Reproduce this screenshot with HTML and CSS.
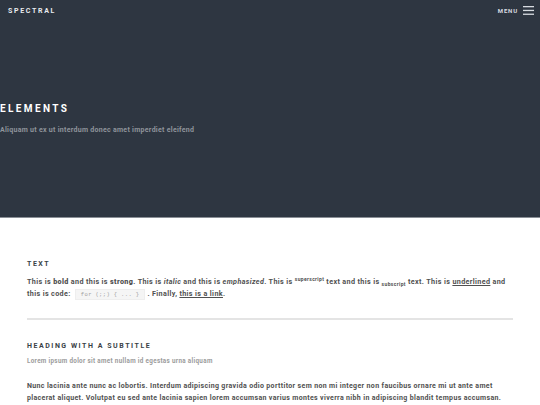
FILE: index.html
```html
<!DOCTYPE html>
<html lang="en">
<head>
  <meta charset="UTF-8">
  <title>Elements - Spectral</title>
  <link rel="stylesheet" href="styles.css">
</head>
<body>
  <header class="topbar">
    <a class="logo" href="#">Spectral</a>
    <a class="menu" href="#">Menu
      <svg class="menu-icon" width="11" height="9" viewBox="0 0 11 9">
        <rect x="0" y="0" width="11" height="1.3" fill="#d7dbe0"/>
        <rect x="0" y="3.8" width="11" height="1.3" fill="#d7dbe0"/>
        <rect x="0" y="7.6" width="11" height="1.3" fill="#d7dbe0"/>
      </svg>
    </a>
  </header>

  <section class="banner">
    <h1>Elements</h1>
    <p>Aliquam ut ex ut interdum donec amet imperdiet eleifend</p>
  </section>

  <main class="content">
    <section class="block">
      <h3>Text</h3>
      <p>This is <b>bold</b> and this is <strong>strong</strong>. This is <i>italic</i> and this is <em>emphasized</em>. This is <sup>superscript</sup> text and this is <sub>subscript</sub> text. This is <u>underlined</u> and this is code: <code>for (;;) { ... }</code>. Finally, <a href="#">this is a link</a>.</p>
    </section>

    <hr>

    <section class="block">
      <header class="heading">
        <h3>Heading with a Subtitle</h3>
        <p class="subtitle">Lorem ipsum dolor sit amet nullam id egestas urna aliquam</p>
      </header>
      <p class="lead">Nunc lacinia ante nunc ac lobortis. Interdum adipiscing gravida odio porttitor sem non mi integer non faucibus ornare mi ut ante amet placerat aliquet. Volutpat eu sed ante lacinia sapien lorem accumsan varius montes viverra nibh in adipiscing blandit tempus accumsan.</p>
    </section>
  </main>
</body>
</html>
```

FILE: styles.css
```css
body {
  margin: 0;
  font-family: Roboto, "Liberation Sans", sans-serif;
  font-weight: 700;
  background: #ffffff;
  color: #505050;
}

a {
  color: inherit;
}

.topbar {
  background: #2e3641;
  height: 21px;
  display: flex;
  align-items: center;
  justify-content: space-between;
  padding: 0 5px 0 8px;
}

.logo {
  color: #e9ecef;
  text-decoration: none;
  text-transform: uppercase;
  font-size: 7px;
  letter-spacing: 0.24em;
}

.menu {
  display: flex;
  align-items: center;
  gap: 5px;
  color: #d7dbe0;
  text-decoration: none;
  text-transform: uppercase;
  font-size: 6px;
  letter-spacing: 0.14em;
  padding-right: 1px;
}

.banner {
  background: #2e3641;
  height: 197px;
  border-bottom: 1px solid #8a8f96;
  padding-top: 82px;
  box-sizing: border-box;
}

.banner h1 {
  margin: 0;
  color: #ffffff;
  font-size: 10px;
  letter-spacing: 0.24em;
  text-transform: uppercase;
  line-height: 12px;
}

.banner p {
  margin: 11px 0 0;
  color: #8f949b;
  font-size: 7px;
  letter-spacing: 0.04em;
}

.content {
  padding: 42px 27px 0;
}

h3 {
  margin: 0 0 8px;
  font-size: 7px;
  letter-spacing: 0.22em;
  text-transform: uppercase;
  color: #3a3f46;
}

.block p {
  margin: 0;
  font-size: 7.2px;
  line-height: 12px;
  letter-spacing: 0.05em;
}

.block .lead {
  font-size: 7px;
  letter-spacing: 0.05em;
}

sup, sub {
  font-size: 5px;
  line-height: 0;
}

code {
  font-family: "Liberation Mono", monospace;
  font-weight: 400;
  font-size: 5.5px;
  color: #a0a0a0;
  background: #f5f5f5;
  border: 1px solid #eeeeee;
  padding: 1px 5px;
  margin: 0 2px;
}

hr {
  border: 0;
  border-top: 2px solid #e4e4e4;
  margin: 17px 0 22px;
}

.heading {
  margin-bottom: 14px;
}

.heading h3 {
  margin-bottom: 6px;
}

.block .subtitle {
  color: #9c9c9c;
  font-size: 6.3px;
  line-height: 10px;
}
```
